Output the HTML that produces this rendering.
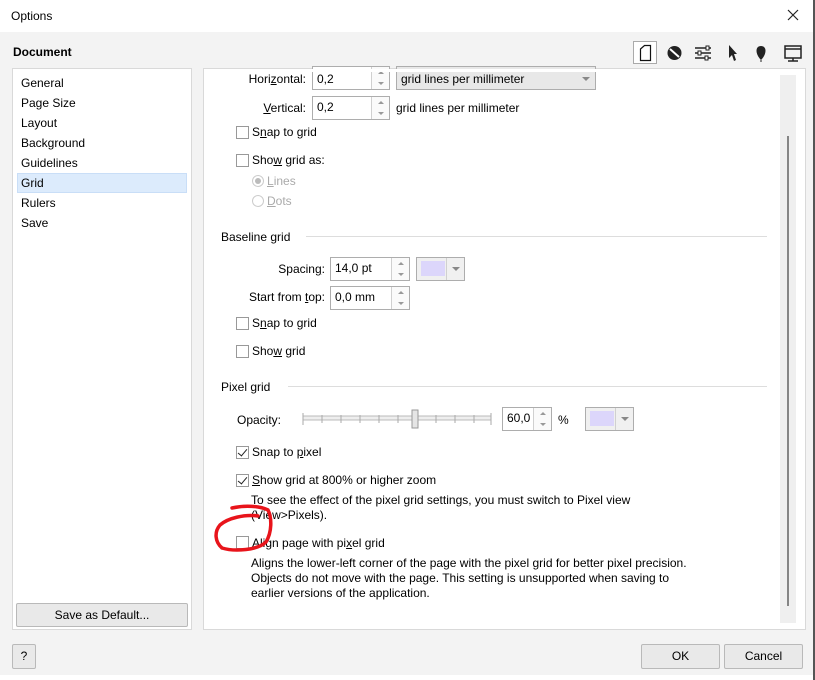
<!DOCTYPE html>
<html><head><meta charset="utf-8"><style>
*{box-sizing:border-box;margin:0;padding:0}
body{width:815px;height:680px;position:relative;overflow:hidden;background:#fff;font-family:"Liberation Sans",sans-serif;font-size:12px;color:#000}
.a{position:absolute;white-space:nowrap}
.t{position:absolute;white-space:nowrap;line-height:14px}
.cb{position:absolute;width:13px;height:13px;border:1px solid #999;background:#fff}
.inp{position:absolute;background:#fff;border:1px solid #adadad;padding-left:4px;line-height:20px}
.spin{position:absolute;right:0;top:0;bottom:0;width:18px;border-left:1px solid #d0d0d0;background:#fafafa}
.spin:before{content:"";position:absolute;left:6px;top:4px;border:3px solid transparent;border-bottom:3px solid #999;border-top:0}
.spin:after{content:"";position:absolute;left:6px;bottom:4px;border:3px solid transparent;border-top:3px solid #999;border-bottom:0}
.col{position:absolute;border:1px solid #adadad;background:#f0f0f0}
.col i{position:absolute;left:4px;top:3px;width:24px;height:15px;background:#dcd6fb}
.col b{position:absolute;right:0;top:0;bottom:0;width:18px;border-left:1px solid #d0d0d0}
.col b:after{content:"";position:absolute;left:5px;top:9px;border:4px solid transparent;border-top:4px solid #888;border-bottom:0}
.btn{position:absolute;background:#e9e9e9;border:1px solid #b9b9b9;border-radius:2px;text-align:center}
u{text-decoration:underline}
.ck:after{content:"";position:absolute;left:3px;top:0px;width:4px;height:8px;border:solid #222;border-width:0 1.5px 1.5px 0;transform:rotate(40deg)}
</style></head><body>
<div class="a" style="left:0;top:32px;width:813px;height:643px;background:#f3f3f3"></div>
<div class="a" style="left:813px;top:0;width:2px;height:680px;background:#555"></div>
<div class="t" style="left:11px;top:9px">Options</div>
<svg class="a" style="left:787px;top:9px" width="12" height="12"><path d="M1 1L11 11M11 1L1 11" stroke="#222" stroke-width="1.2"/></svg>
<div class="t" style="left:13px;top:45px;font-weight:bold">Document</div>
<!-- icons -->
<div class="a" style="left:633px;top:41px;width:24px;height:23px;border:1px solid #aaa;background:#fff"></div>
<svg class="a" style="left:633px;top:41px" width="180" height="24" viewBox="0 0 180 24">
<path d="M7.5 8 L11.5 4.5 H17.5 V19.5 H7.5 Z" fill="none" stroke="#111" stroke-width="1.2"/>
<circle cx="41.5" cy="12" r="7" fill="#222"/><path d="M37 8 L46 16" stroke="#fff" stroke-width="2"/>
<path d="M62 7h16M62 12h16M62 17h16" stroke="#222" stroke-width="1.5"/><rect x="73" y="5" width="3" height="4" fill="#fff" stroke="#222"/><rect x="65" y="10" width="3" height="4" fill="#fff" stroke="#222"/><rect x="72" y="15" width="3" height="4" fill="#fff" stroke="#222"/>
<path d="M96 4 L96 17 L99 14 L101 20 L103 19 L101 13 L104 13 Z" fill="#222"/>
<path d="M128 19 C122 13 122 5 128 5 C134 5 134 13 128 19 Z" fill="#222"/><path d="M128 19v2" stroke="#222"/>
<rect x="152" y="5" width="16" height="12" fill="none" stroke="#222" stroke-width="1.5"/><path d="M152 8h16M160 17v3M155 20h10" stroke="#222" stroke-width="1.5"/>
</svg>
<!-- list -->
<div class="a" style="left:12px;top:68px;width:180px;height:562px;background:#fff;border:1px solid #d9d9d9"></div>
<div class="a" style="left:17px;top:173px;width:170px;height:20px;background:#dcebfc;border:1px solid #c9def7"></div>
<div class="t" style="left:21px;top:76px">General</div>
<div class="t" style="left:21px;top:96px">Page Size</div>
<div class="t" style="left:21px;top:116px">Layout</div>
<div class="t" style="left:21px;top:136px">Background</div>
<div class="t" style="left:21px;top:156px">Guidelines</div>
<div class="t" style="left:21px;top:176px">Grid</div>
<div class="t" style="left:21px;top:196px">Rulers</div>
<div class="t" style="left:21px;top:216px">Save</div>
<div class="btn" style="left:16px;top:603px;width:172px;height:24px;line-height:22px">Save as Default...</div>
<!-- panel -->
<div class="a" style="left:203px;top:68px;width:603px;height:562px;background:#fff;border:1px solid #d9d9d9;overflow:hidden"></div>
<div class="a" style="left:780px;top:75px;width:16px;height:548px;background:#efefef"></div>
<div class="a" style="left:787px;top:136px;width:2px;height:470px;background:#858585"></div>
<!-- horizontal -->
<div class="t" style="left:248px;top:72px;width:58px;text-align:right">Hori<u>z</u>ontal:</div>
<div class="inp" style="left:312px;top:66px;width:78px;height:24px;line-height:24px">0,2<div class="spin"></div></div>
<div class="a" style="left:396px;top:66px;width:200px;height:24px;background:#e8e8e8;border:1px solid #adadad;padding-left:4px;line-height:24px">grid lines per millimeter</div>
<div class="a" style="left:582px;top:77px;border:4px solid transparent;border-top:4px solid #888"></div>
<div class="a" style="left:204px;top:69px;width:575px;height:3px;background:#fff"></div>
<div class="t" style="left:248px;top:101px;width:58px;text-align:right"><u>V</u>ertical:</div>
<div class="inp" style="left:312px;top:96px;width:78px;height:24px">0,2<div class="spin"></div></div>
<div class="t" style="left:396px;top:101px">grid lines per millimeter</div>
<div class="cb" style="left:236px;top:126px"></div><div class="t" style="left:252px;top:125px">S<u>n</u>ap to grid</div>
<div class="cb" style="left:236px;top:154px"></div><div class="t" style="left:252px;top:153px">Sho<u>w</u> grid as:</div>
<div class="a" style="left:252px;top:175px;width:12px;height:12px;border:1px solid #ccc;border-radius:50%;background:#fff"><div class="a" style="left:2px;top:2px;width:6px;height:6px;border-radius:50%;background:#bbb"></div></div>
<div class="t" style="left:267px;top:174px;color:#aaa"><u>L</u>ines</div>
<div class="a" style="left:252px;top:195px;width:12px;height:12px;border:1px solid #ccc;border-radius:50%;background:#fff"></div>
<div class="t" style="left:267px;top:194px;color:#aaa"><u>D</u>ots</div>
<!-- baseline -->
<div class="t" style="left:221px;top:230px">Baseline grid</div>
<div class="a" style="left:306px;top:236px;width:461px;height:1px;background:#ddd"></div>
<div class="t" style="left:250px;top:262px;width:75px;text-align:right">Spacin<u>g</u>:</div>
<div class="inp" style="left:330px;top:257px;width:80px;height:24px">14,0 pt<div class="spin"></div></div>
<div class="col" style="left:416px;top:257px;width:49px;height:24px"><i></i><b></b></div>
<div class="t" style="left:230px;top:290px;width:95px;text-align:right">Start from <u>t</u>op:</div>
<div class="inp" style="left:330px;top:286px;width:80px;height:24px">0,0 mm<div class="spin"></div></div>
<div class="cb" style="left:236px;top:317px"></div><div class="t" style="left:252px;top:316px">S<u>n</u>ap to grid</div>
<div class="cb" style="left:236px;top:345px"></div><div class="t" style="left:252px;top:344px">Sho<u>w</u> grid</div>
<!-- pixel -->
<div class="t" style="left:221px;top:380px">Pixel grid</div>
<div class="a" style="left:288px;top:386px;width:479px;height:1px;background:#ddd"></div>
<div class="t" style="left:237px;top:413px">Opacity:</div>
<svg class="a" style="left:300px;top:408px" width="194" height="22">
<rect x="3" y="8" width="188" height="4" fill="#eee" stroke="#bbb"/>
<g stroke="#aaa"><path d="M3 5v12M22 7v8M41 7v8M60 7v8M79 7v8M98 7v8M117 7v8M136 7v8M155 7v8M174 7v8M191 5v12"/></g>
<rect x="112" y="2" width="6" height="18" fill="#e5e5e5" stroke="#999"/>
</svg>
<div class="inp" style="left:502px;top:407px;width:50px;height:24px">60,0<div class="spin"></div></div>
<div class="t" style="left:558px;top:413px">%</div>
<div class="col" style="left:585px;top:407px;width:49px;height:24px"><i></i><b></b></div>
<div class="cb ck" style="left:236px;top:446px"></div><div class="t" style="left:252px;top:445px">Snap to <u>p</u>ixel</div>
<div class="cb ck" style="left:236px;top:474px"></div><div class="t" style="left:252px;top:473px"><u>S</u>how grid at 800% or higher zoom</div>
<div class="t" style="left:251px;top:493px">To see the effect of the pixel grid settings, you must switch to Pixel view</div>
<div class="t" style="left:251px;top:508px">(View&gt;Pixels).</div>
<div class="cb" style="left:236px;top:536px"></div><div class="t" style="left:252px;top:536px">Align page with pi<u>x</u>el grid</div>
<div class="t" style="left:251px;top:556px">Aligns the lower-left corner of the page with the pixel grid for better pixel precision.</div>
<div class="t" style="left:251px;top:571px">Objects do not move with the page. This setting is unsupported when saving to</div>
<div class="t" style="left:251px;top:586px">earlier versions of the application.</div>
<svg class="a" style="left:210px;top:500px" width="70" height="55">
<path d="M22 8 C35 5 50 6 58 10 C62 18 62 32 56 42 C48 50 25 52 12 48 C5 42 4 32 10 25 C18 18 35 14 48 16" fill="none" stroke="#e8141b" stroke-width="3.5" stroke-linecap="round"/>
</svg>
<!-- bottom -->
<div class="btn" style="left:12px;top:644px;width:24px;height:25px;line-height:23px">?</div>
<div class="btn" style="left:641px;top:644px;width:79px;height:25px;line-height:23px">OK</div>
<div class="btn" style="left:724px;top:644px;width:79px;height:25px;line-height:23px">Cancel</div>
</body></html>
